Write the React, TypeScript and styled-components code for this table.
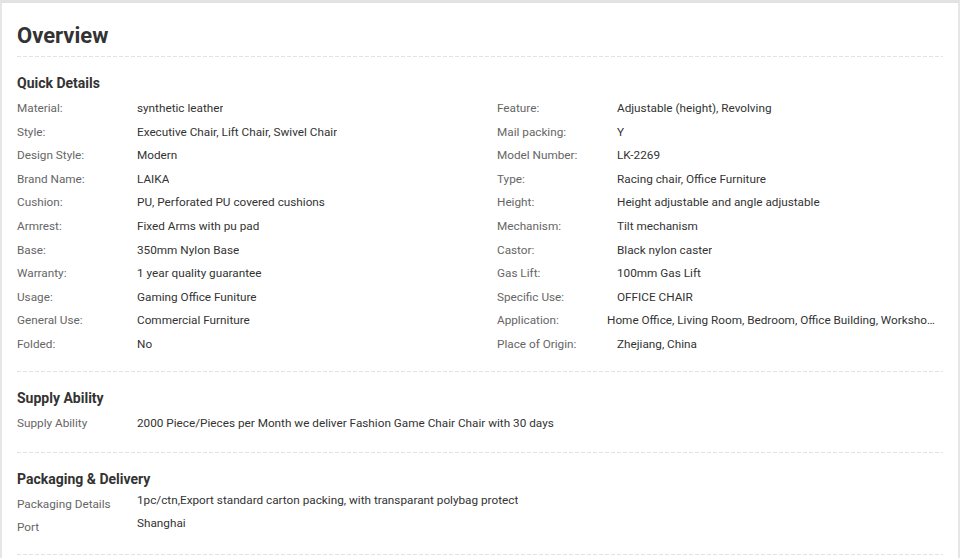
import styled, { createGlobalStyle } from "styled-components"

const GlobalStyle = createGlobalStyle`
    body {
        margin: 0;
        background: #fff;
        font-family: Roboto, "Liberation Sans", Arial, sans-serif;
    }
`

const quickLeft: [string, string][] = [
    ["Material:", "synthetic leather"],
    ["Style:", "Executive Chair, Lift Chair, Swivel Chair"],
    ["Design Style:", "Modern"],
    ["Brand Name:", "LAIKA"],
    ["Cushion:", "PU, Perforated PU covered cushions"],
    ["Armrest:", "Fixed Arms with pu pad"],
    ["Base:", "350mm Nylon Base"],
    ["Warranty:", "1 year quality guarantee"],
    ["Usage:", "Gaming Office Funiture"],
    ["General Use:", "Commercial Furniture"],
    ["Folded:", "No"],
]

const quickRight: [string, string][] = [
    ["Feature:", "Adjustable (height), Revolving"],
    ["Mail packing:", "Y"],
    ["Model Number:", "LK-2269"],
    ["Type:", "Racing chair, Office Furniture"],
    ["Height:", "Height adjustable and angle adjustable"],
    ["Mechanism:", "Tilt mechanism"],
    ["Castor:", "Black nylon caster"],
    ["Gas Lift:", "100mm Gas Lift"],
    ["Specific Use:", "OFFICE CHAIR"],
    ["Application:", "Home Office, Living Room, Bedroom, Office Building, Workshop, Gaming Room"],
    ["Place of Origin:", "Zhejiang, China"],
]

export default function App() {
    return (
        <>
            <GlobalStyle />
            <Panel>
                <Title>Overview</Title>
                <Section $bottom={15}>
                    <SectionTitle>Quick Details</SectionTitle>
                    <Columns>
                        <div>
                            {quickLeft.map(([k, v]) => (
                                <Row key={k}>
                                    <Label>{k}</Label>
                                    <Value>{v}</Value>
                                </Row>
                            ))}
                        </div>
                        <div>
                            {quickRight.map(([k, v]) => (
                                <Row key={k}>
                                    <Label>{k}</Label>
                                    <Value $shift={k === "Application:"}>{v}</Value>
                                </Row>
                            ))}
                        </div>
                    </Columns>
                </Section>
                <Section $bottom={18}>
                    <SectionTitle>Supply Ability</SectionTitle>
                    <Row>
                        <Label>Supply Ability</Label>
                        <Value>2000 Piece/Pieces per Month we deliver Fashion Game Chair Chair with 30 days</Value>
                    </Row>
                </Section>
                <Section>
                    <SectionTitle>Packaging &amp; Delivery</SectionTitle>
                    <PackRow>
                        <PackLabel>Packaging Details</PackLabel>
                        <Value>1pc/ctn,Export standard carton packing, with transparant polybag protect</Value>
                    </PackRow>
                    <PackRow>
                        <PackLabel>Port</PackLabel>
                        <Value>Shanghai</Value>
                    </PackRow>
                </Section>
            </Panel>
        </>
    )
}

const dashed = `
    background-image: linear-gradient(to right, #e2e2e2 4px, transparent 4px);
    background-size: 6px 1px;
    background-repeat: repeat-x;
    background-position: left bottom;
`

const Panel = styled.div`
    width: 960px;
    height: 558px;
    box-sizing: border-box;
    border-top: 3px solid #e2e2e2;
    border-left: 2px solid #e6e6e6;
    border-right: 2px solid #e6e6e6;
    padding: 0 15px;
    overflow: hidden;
    color: #333;
`

const Title = styled.h2`
    margin: 0;
    height: 54px;
    box-sizing: border-box;
    padding: 20px 0 8px 0;
    font-size: 22px;
    line-height: 26px;
    font-weight: 700;
    color: #333;
    ${dashed}
`

const Section = styled.div<{ $top?: number; $bottom?: number }>`
    padding: ${(p) => p.$top ?? 16}px 0 ${(p) => p.$bottom ?? 16}px;
    ${dashed}
`

const SectionTitle = styled.h3`
    margin: 0 0 4px;
    font-size: 14px;
    line-height: 20px;
    font-weight: 700;
    color: #333;
`

const Columns = styled.div`
    display: grid;
    grid-template-columns: 480px 1fr;
`

const Row = styled.div`
    display: flex;
    font-size: 11.75px;
    line-height: 23.6px;
    white-space: nowrap;
`

const Label = styled.div`
    width: 120px;
    flex: none;
    color: #666;
`

const Value = styled.div<{ $shift?: boolean }>`
    color: #333;
    overflow: hidden;
    text-overflow: ellipsis;
    margin-left: ${(p) => (p.$shift ? "-10px" : "0")};
    max-width: ${(p) => (p.$shift ? "331px" : "none")};
`

const PackRow = styled.div`
    display: flex;
    height: 23px;
    font-size: 11.75px;
    line-height: 15px;
    white-space: nowrap;
`

const PackLabel = styled(Label)`
    padding-top: 4px;
`
